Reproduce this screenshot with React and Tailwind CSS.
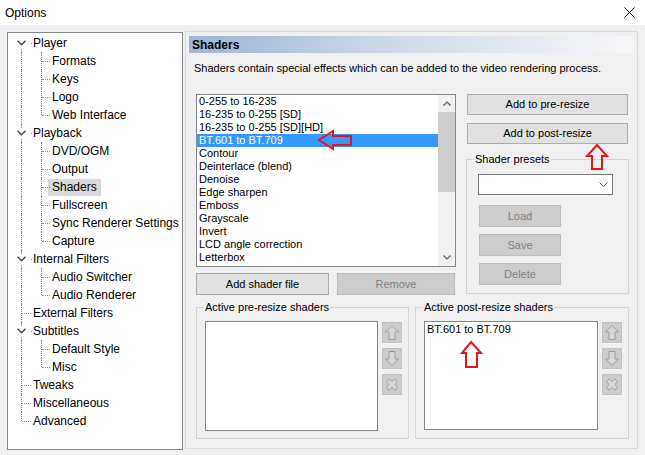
import React from 'react';

const TREE = [
  { label: 'Player', level: 0, exp: true },
  { label: 'Formats', level: 1 },
  { label: 'Keys', level: 1 },
  { label: 'Logo', level: 1 },
  { label: 'Web Interface', level: 1, last: true },
  { label: 'Playback', level: 0, exp: true },
  { label: 'DVD/OGM', level: 1 },
  { label: 'Output', level: 1 },
  { label: 'Shaders', level: 1, sel: true },
  { label: 'Fullscreen', level: 1 },
  { label: 'Sync Renderer Settings', level: 1 },
  { label: 'Capture', level: 1, last: true },
  { label: 'Internal Filters', level: 0, exp: true },
  { label: 'Audio Switcher', level: 1 },
  { label: 'Audio Renderer', level: 1, last: true },
  { label: 'External Filters', level: 0 },
  { label: 'Subtitles', level: 0, exp: true },
  { label: 'Default Style', level: 1 },
  { label: 'Misc', level: 1, last: true },
  { label: 'Tweaks', level: 0 },
  { label: 'Miscellaneous', level: 0 },
  { label: 'Advanced', level: 0 },
];

const SHADERS = [
  '0-255 to 16-235',
  '16-235 to 0-255 [SD]',
  '16-235 to 0-255 [SD][HD]',
  'BT.601 to BT.709',
  'Contour',
  'Deinterlace (blend)',
  'Denoise',
  'Edge sharpen',
  'Emboss',
  'Grayscale',
  'Invert',
  'LCD angle correction',
  'Letterbox',
];

function TreeRow({ item, index, count }) {
  const { label, level, exp, last, sel } = item;
  const first = index === 0;
  const end = index === count - 1;
  return (
    <div className="relative h-[18px] flex items-center">
      {/* level 0 spine */}
      <span
        className={`absolute left-[13px] w-0 border-l border-dotted border-[#8c8c8c] ${
          first ? 'top-[13px] bottom-0' : end ? 'top-0 h-[9px]' : 'top-0 bottom-0'
        }`}
      />
      {level === 1 && (
        <>
          <span
            className={`absolute left-[33px] w-0 border-l border-dotted border-[#8c8c8c] ${
              last ? 'top-0 h-[9px]' : 'top-0 bottom-0'
            }`}
          />
          <span className="absolute left-[34px] top-[9px] w-[8px] border-t border-dotted border-[#8c8c8c]" />
        </>
      )}
      {level === 0 && !exp && (
        <span className="absolute left-[14px] top-[9px] w-[9px] border-t border-dotted border-[#8c8c8c]" />
      )}
      {exp && (
        <>
          <span className="absolute left-[8px] top-[4px] w-[11px] h-[10px] bg-white flex items-center justify-center">
            <svg width="9" height="6" viewBox="0 0 9 6">
              <polyline points="0.5,0.8 4.5,4.8 8.5,0.8" fill="none" stroke="#404040" strokeWidth="1.3" />
            </svg>
          </span>
          <span className="absolute left-[23px] top-[9px] w-[1px] h-[1px] bg-[#8c8c8c]" />
        </>
      )}
      <span
        className={`h-[17px] leading-[17px] whitespace-nowrap ${
          level === 1 ? 'ml-[40px] px-[4px]' : 'ml-[25px]'
        } ${sel ? 'bg-[#d9d9d9]' : ''}`}
      >
        {label}
      </span>
    </div>
  );
}

function Button({ children, disabled, className = '' }) {
  return (
    <div
      className={`flex items-center justify-center border text-[11px] ${
        disabled ? 'bg-[#cccccc] border-[#bfbfbf] text-[#838383]' : 'bg-[#e1e1e1] border-[#adadad] text-black'
      } ${className}`}
    >
      {children}
    </div>
  );
}

function IconButton({ kind }) {
  return (
    <div className="w-[20px] h-[21px] bg-[#cccccc] border border-[#c2c2c2] flex items-center justify-center">
      <svg width="18" height="19" viewBox="0 0 18 19">
        {kind === 'up' && (
          <polygon points="9,2.5 15.5,9 12,9 12,16.5 6,16.5 6,9 2.5,9" fill="#d6d6d6" stroke="#9c9c9c" strokeWidth="1" />
        )}
        {kind === 'down' && (
          <polygon points="9,16.5 15.5,10 12,10 12,2.5 6,2.5 6,10 2.5,10" fill="#d6d6d6" stroke="#9c9c9c" strokeWidth="1" />
        )}
        {kind === 'x' && (
          <polygon
            points="11.8,3.8 14.7,6.7 11.8,9.5 14.7,12.3 11.8,15.2 9,12.3 6.2,15.2 3.3,12.3 6.2,9.5 3.3,6.7 6.2,3.8 9,6.7"
            fill="#d6d6d6"
            stroke="#9c9c9c"
            strokeWidth="1"
          />
        )}
      </svg>
    </div>
  );
}

function GroupBox({ label, className = '', children }) {
  return (
    <div className={`relative border border-[#d5d5d5] ${className}`}>
      <span className="absolute -top-[7px] left-[7px] px-[1px] bg-[#f0f0f0] leading-[13px] text-[11px] whitespace-nowrap">
        {label}
      </span>
      {children}
    </div>
  );
}

function ActiveShaders({ label, width, listWidth, listHeight, items }) {
  return (
    <GroupBox label={label} className={`${width} h-[132px]`}>
      <div className="flex pl-[8px] pt-[13px]">
        <div className={`${listWidth} ${listHeight} bg-white border border-[#828790] pl-[2px] pt-[1px] text-[11px] leading-[13px]`}>
          {items.map((s) => (
            <div key={s}>{s}</div>
          ))}
        </div>
        <div className="ml-[4px] mt-[1px] flex flex-col gap-[5px]">
          <IconButton kind="up" />
          <IconButton kind="down" />
          <IconButton kind="x" />
        </div>
      </div>
    </GroupBox>
  );
}

function RedArrow({ className, points, w, h }) {
  return (
    <svg className={`absolute ${className}`} width={w} height={h} viewBox={`0 0 ${w} ${h}`}>
      <polygon points={points} fill="none" stroke="#e8141c" strokeWidth="2" strokeLinejoin="miter" />
    </svg>
  );
}

export default function App() {
  return (
    <div className="relative w-[645px] h-[455px] bg-[#f0f0f0] overflow-hidden text-black font-['Liberation_Sans',Arial,sans-serif]">
      {/* title bar */}
      <div className="h-[25px] bg-white flex items-center justify-between pl-[5px] pr-[10px]">
        <span className="text-[12px]">Options</span>
        <svg width="11" height="11" viewBox="0 0 11 11">
          <path d="M0.5 0.5 L10.5 10.5 M10.5 0.5 L0.5 10.5" stroke="#000" strokeWidth="1" />
        </svg>
      </div>

      <div className="flex pl-[7px] pt-[7px]">
        {/* page tree */}
        <div className="w-[176px] h-[418px] bg-white border border-[#828790] pt-[1px] text-[12px]">
          {TREE.map((item, i) => (
            <TreeRow key={item.label} item={item} index={i} count={TREE.length} />
          ))}
        </div>

        {/* shaders page */}
        <div className="ml-[2px] -mt-[1px] w-[453px] h-[418px] border border-[#dadada]">
          <div className="ml-[3px] mt-[4px] w-[444px] h-[17px] pl-[3px] flex items-center bg-gradient-to-r from-[#9fb5d2] via-[#d3dce8] to-[#f6f7f9]">
            <span className="text-[12px] font-bold">Shaders</span>
          </div>
          <div className="mt-[9px] pl-[8px] text-[11px] leading-[13px]">
            Shaders contain special effects which can be added to the video rendering process.
          </div>

          <div className="mt-[19px] pl-[10px]">
            <div className="flex">
              <div className="w-[260px]">
                <div className="h-[173px] flex bg-white border border-[#828790]">
                  <div className="flex-1 text-[11px] leading-[13px]">
                    {SHADERS.map((s, i) => (
                      <div
                        key={s}
                        className={`h-[13px] pl-[2px] whitespace-nowrap ${
                          i === 3 ? 'bg-[#3399ff] text-white' : ''
                        }`}
                      >
                        {s}
                      </div>
                    ))}
                  </div>
                  <div className="w-[17px] bg-[#f0f0f0] flex flex-col">
                    <div className="h-[17px] flex items-center justify-center">
                      <svg width="8" height="5" viewBox="0 0 8 5">
                        <polyline points="0.5,4.5 4,1 7.5,4.5" fill="none" stroke="#606060" strokeWidth="1.2" />
                      </svg>
                    </div>
                    <div className="h-[80px] bg-[#cdcdcd]" />
                    <div className="flex-1" />
                    <div className="h-[17px] flex items-center justify-center">
                      <svg width="8" height="5" viewBox="0 0 8 5">
                        <polyline points="0.5,0.5 4,4 7.5,0.5" fill="none" stroke="#606060" strokeWidth="1.2" />
                      </svg>
                    </div>
                  </div>
                </div>
                <div className="mt-[6px] flex">
                  <Button className="w-[133px] h-[22px]">Add shader file</Button>
                  <Button disabled className="ml-[8px] w-[118px] h-[22px]">Remove</Button>
                </div>
              </div>

              <div className="ml-[10px] w-[163px]">
                <Button className="ml-[1px] w-[161px] h-[21px]">Add to pre-resize</Button>
                <Button className="ml-[1px] mt-[8px] w-[161px] h-[21px]">Add to post-resize</Button>
                <GroupBox label="Shader presets" className="mt-[15px] h-[135px]">
                  <div className="pl-[11px] pt-[14px]">
                    <div className="w-[135px] h-[21px] bg-white border border-[#7a7a7a] flex items-center justify-end pr-[4px]">
                      <svg width="9" height="5" viewBox="0 0 9 5">
                        <polyline points="0.5,0.5 4.5,4.5 8.5,0.5" fill="none" stroke="#606060" strokeWidth="1" />
                      </svg>
                    </div>
                    <div className="ml-[1px] mt-[10px] flex flex-col gap-[7px]">
                      <Button disabled className="w-[82px] h-[22px]">Load</Button>
                      <Button disabled className="w-[82px] h-[22px]">Save</Button>
                      <Button disabled className="w-[82px] h-[22px]">Delete</Button>
                    </div>
                  </div>
                </GroupBox>
              </div>
            </div>

            <div className="mt-[12px] flex gap-[6px]">
              <ActiveShaders
                label="Active pre-resize shaders"
                width="w-[213px]"
                listWidth="w-[173px]"
                listHeight="h-[110px]"
                items={[]}
              />
              <ActiveShaders
                label="Active post-resize shaders"
                width="w-[214px]"
                listWidth="w-[174px]"
                listHeight="h-[109px]"
                items={['BT.601 to BT.709']}
              />
            </div>
          </div>
        </div>
      </div>

      {/* red annotation arrows */}
      <RedArrow
        className="left-[317px] top-[129px]"
        w={37}
        h={22}
        points="2,11 16,2 16,7 34,7 34,16 16,16 16,20"
      />
      <RedArrow
        className="left-[585px] top-[143px]"
        w={24}
        h={28}
        points="12,2 22,13 17,13 17,26 7,26 7,13 2,13"
      />
      <RedArrow
        className="left-[460px] top-[340px]"
        w={24}
        h={29}
        points="11,2 21,13 17,13 17,27 6,27 6,13 2,13"
      />
    </div>
  );
}
